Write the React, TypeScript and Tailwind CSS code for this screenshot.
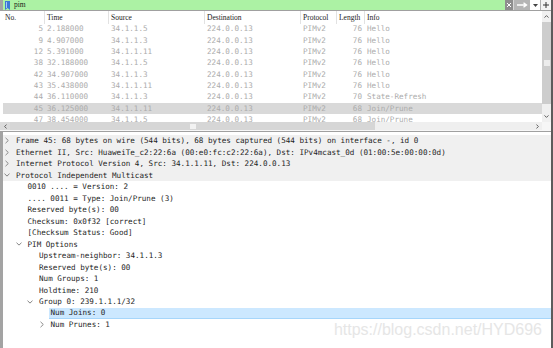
import React from 'react';

type Packet = {
  no: number;
  time: string;
  src: string;
  len: number;
  info: string;
  selected?: boolean;
};

const packets: Packet[] = [
  { no: 5, time: '2.188000', src: '34.1.1.5', len: 76, info: 'Hello' },
  { no: 9, time: '4.907000', src: '34.1.1.3', len: 76, info: 'Hello' },
  { no: 12, time: '5.391000', src: '34.1.1.11', len: 76, info: 'Hello' },
  { no: 38, time: '32.188000', src: '34.1.1.5', len: 76, info: 'Hello' },
  { no: 42, time: '34.907000', src: '34.1.1.3', len: 76, info: 'Hello' },
  { no: 43, time: '35.438000', src: '34.1.1.11', len: 76, info: 'Hello' },
  { no: 44, time: '36.110000', src: '34.1.1.3', len: 70, info: 'State-Refresh' },
  { no: 45, time: '36.125000', src: '34.1.1.11', len: 68, info: 'Join/Prune', selected: true },
  { no: 47, time: '38.454000', src: '34.1.1.5', len: 68, info: 'Join/Prune' },
];

type Line = {
  level: number;
  arrow?: 'open' | 'closed';
  text: string;
  shaded?: boolean;
  selected?: boolean;
};

const lines: Line[] = [
  { level: 0, arrow: 'closed', shaded: true, text: 'Frame 45: 68 bytes on wire (544 bits), 68 bytes captured (544 bits) on interface -, id 0' },
  { level: 0, arrow: 'closed', shaded: true, text: 'Ethernet II, Src: HuaweiTe_c2:22:6a (00:e0:fc:c2:22:6a), Dst: IPv4mcast_0d (01:00:5e:00:00:0d)' },
  { level: 0, arrow: 'closed', shaded: true, text: 'Internet Protocol Version 4, Src: 34.1.1.11, Dst: 224.0.0.13' },
  { level: 0, arrow: 'open', shaded: true, text: 'Protocol Independent Multicast' },
  { level: 1, text: '0010 .... = Version: 2' },
  { level: 1, text: '.... 0011 = Type: Join/Prune (3)' },
  { level: 1, text: 'Reserved byte(s): 00' },
  { level: 1, text: 'Checksum: 0x0f32 [correct]' },
  { level: 1, text: '[Checksum Status: Good]' },
  { level: 1, arrow: 'open', text: 'PIM Options' },
  { level: 2, text: 'Upstream-neighbor: 34.1.1.3' },
  { level: 2, text: 'Reserved byte(s): 00' },
  { level: 2, text: 'Num Groups: 1' },
  { level: 2, text: 'Holdtime: 210' },
  { level: 2, arrow: 'open', text: 'Group 0: 239.1.1.1/32' },
  { level: 3, text: 'Num Joins: 0', selected: true },
  { level: 3, arrow: 'closed', text: 'Num Prunes: 1' },
];

const indent = ['pl-0', 'pl-[11.5px]', 'pl-[23px]', 'pl-[34.5px]'];

const Arrow = ({ kind }: { kind?: 'open' | 'closed' }) => {
  if (kind === 'closed') {
    return (
      <svg width="4" height="7" viewBox="0 0 4 7">
        <path d="M0.5 0.8L3.3 3.5L0.5 6.2" stroke="#8a8a8a" strokeWidth="1" fill="none" />
      </svg>
    );
  }
  if (kind === 'open') {
    return (
      <svg width="7" height="4" viewBox="0 0 7 4">
        <path d="M0.6 0.5L3.5 3.3L6.4 0.5" stroke="#6e6e6e" strokeWidth="1" fill="none" />
      </svg>
    );
  }
  return null;
};

export default function App() {
  return (
    <div className="relative w-[553px] h-[348px] overflow-hidden bg-white flex flex-col border-r-2 border-[#5c5c5c]">
      {/* display filter bar */}
      <div className="h-[11px] flex border-b border-[#a0a0a0] shrink-0">
        <div className="w-[3px] bg-[#a3a3a3]" />
        <div className="flex-1 bg-[#acf2a4] flex items-center gap-[4px] pl-[2px]">
          <svg width="5" height="9" viewBox="0 0 5 9">
            <path d="M0 0H5V9L2.5 7L0 9Z" fill="#3b78d6" />
            <rect x="1" y="1" width="1" height="6" fill="#a9c8f5" />
          </svg>
          <span className="font-['Liberation_Serif',serif] text-[7.5px] leading-none text-[#1a1a1a]">pim</span>
        </div>
        <div className="w-[8px] bg-[#8e8e8e] flex items-center justify-center">
          <svg width="6" height="6" viewBox="0 0 6 6">
            <path d="M1 1L5 5M5 1L1 5" stroke="#ffffff" strokeWidth="1" />
          </svg>
        </div>
        <div className="w-[17px] bg-[#b5b5b5] flex items-center justify-center border-l border-[#d8d8d8]">
          <svg width="11" height="6" viewBox="0 0 11 6">
            <path d="M0 3H9M6.5 0.8L9.5 3L6.5 5.2" stroke="#ffffff" strokeWidth="1.4" fill="none" />
          </svg>
        </div>
        <div className="w-[10px] bg-white flex items-center justify-center">
          <svg width="5" height="3" viewBox="0 0 5 3">
            <path d="M0 0H5L2.5 3Z" fill="#444444" />
          </svg>
        </div>
        <div className="w-[1px] bg-[#b0b0b0]" />
        <div className="w-[10px] bg-[#f4f4f4] flex items-center justify-center">
          <svg width="6" height="6" viewBox="0 0 6 6">
            <path d="M3 0V6M0 3H6" stroke="#333333" strokeWidth="1" />
          </svg>
        </div>
      </div>

      {/* packet list */}
      <div className="h-[111px] flex shrink-0">
        <div className="flex-1 flex flex-col overflow-hidden">
          <div className="h-[12.5px] flex pl-[3px] font-['Liberation_Serif',serif] text-[7.5px] text-[#222222] shrink-0">
            <div className="w-[42px] pl-[2px] flex items-center border-r border-[#e2e2e2]">No.</div>
            <div className="w-[64px] pl-[2px] flex items-center border-r border-[#e2e2e2]">Time</div>
            <div className="w-[96px] pl-[2px] flex items-center border-r border-[#e2e2e2]">Source</div>
            <div className="w-[96px] pl-[2px] flex items-center border-r border-[#e2e2e2]">Destination</div>
            <div className="w-[36px] pl-[2px] flex items-center border-r border-[#e2e2e2]">Protocol</div>
            <div className="w-[28px] pl-[2px] flex items-center border-r border-[#e2e2e2]">Length</div>
            <div className="flex-1 pl-[2px] flex items-center">Info</div>
          </div>
          <div className="pl-[3px] font-['DejaVu_Sans_Mono',monospace] text-[7.6px] text-[#acacac]">
            {packets.map((p) => (
              <div
                key={p.no}
                className={`h-[11.33px] flex items-center whitespace-nowrap ${p.selected ? 'bg-[#d9d9d9]' : ''}`}
              >
                <div className="w-[42px] pr-[2px] text-right">{p.no}</div>
                <div className="w-[64px] pl-[2px]">{p.time}</div>
                <div className="w-[96px] pl-[2px]">{p.src}</div>
                <div className="w-[96px] pl-[2px]">224.0.0.13</div>
                <div className="w-[36px] pl-[2px]">PIMv2</div>
                <div className="w-[28px] pr-[3px] text-right">{p.len}</div>
                <div className="flex-1 pl-[2px]">{p.info}</div>
              </div>
            ))}
          </div>
        </div>
        {/* vertical scrollbar */}
        <div className="w-[9px] flex flex-col bg-[#f0f0f0]">
          <div className="h-[11px] flex items-center justify-center">
            <svg width="5" height="3" viewBox="0 0 5 3">
              <path d="M0.5 2.6L2.5 0.6L4.5 2.6" stroke="#606060" strokeWidth="1" fill="none" />
            </svg>
          </div>
          <div className="h-[82px] bg-[#cdcdcd] flex items-center justify-center">
            <div className="w-[6px] h-[6px] bg-[#ececec]" />
          </div>
          <div className="flex-1" />
          <div className="h-[11px] flex items-center justify-center">
            <svg width="5" height="3" viewBox="0 0 5 3">
              <path d="M0.5 0.4L2.5 2.4L4.5 0.4" stroke="#606060" strokeWidth="1" fill="none" />
            </svg>
          </div>
        </div>
      </div>

      {/* horizontal scrollbar */}
      <div className="h-[8px] flex shrink-0 bg-[#efefef]">
        <div className="w-[10px] flex items-center justify-center bg-[#dcdcdc]">
          <svg width="3" height="5" viewBox="0 0 3 5">
            <path d="M2.6 0.5L0.6 2.5L2.6 4.5" stroke="#606060" strokeWidth="1" fill="none" />
          </svg>
        </div>
        <div className="w-[365px] bg-[#d6d6d6] flex items-center justify-center">
          <div className="w-[6px] h-[5px] bg-[#f2f2f2]" />
        </div>
        <div className="flex-1" />
        <div className="w-[10px] flex items-center justify-center">
          <svg width="3" height="5" viewBox="0 0 3 5">
            <path d="M0.4 0.5L2.4 2.5L0.4 4.5" stroke="#606060" strokeWidth="1" fill="none" />
          </svg>
        </div>
        <div className="w-[9px] bg-[#f6f6f6]" />
      </div>
      <div className="h-[1px] bg-[#f7f7f7] shrink-0" />
      <div className="h-[1px] bg-[#a0a0a0] shrink-0" />

      {/* packet details */}
      <div className="flex-1 border-l-[3px] border-[#a3a3a3] pt-[3px] font-['DejaVu_Sans_Mono',monospace] text-[7.6px] text-[#1e1e1e]">
        {lines.map((l, i) => (
          <div
            key={i}
            className={`h-[11.5px] flex whitespace-nowrap ${indent[l.level]} ${l.shaded ? 'bg-[#f0f0f0]' : ''}`}
          >
            <div className="w-[11px] shrink-0 pl-[1px] flex items-center">
              <div className="w-[6px] flex items-center justify-center">
                <Arrow kind={l.arrow} />
              </div>
            </div>
            <div
              className={`flex-1 pl-[2px] flex items-center ${l.selected ? 'bg-[#cce8ff] border-b border-[#a6d6fb]' : ''}`}
            >
              {l.text}
            </div>
          </div>
        ))}
      </div>

      {/* watermark */}
      <div className="absolute right-[9px] top-[318px] font-['Liberation_Sans',sans-serif] text-[16px] text-[#e6e6e6] pointer-events-none">
        https://blog.csdn.net/HYD696
      </div>
    </div>
  );
}
